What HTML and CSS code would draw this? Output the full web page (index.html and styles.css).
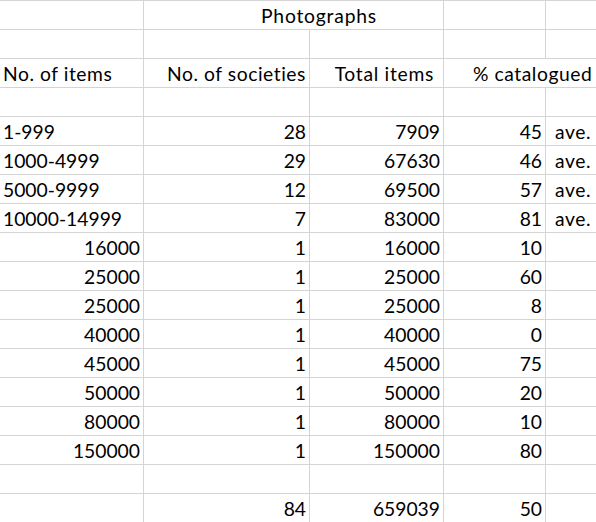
FILE: index.html
```html
<!DOCTYPE html>
<html>
<head>
<meta charset="utf-8">
<link rel="stylesheet" href="styles.css">
</head>
<body>
<div class="sheet">
  <div class="c"></div><div class="c span2 title t">Photographs</div><div class="c"></div><div class="c e"></div>
  <div class="c"></div><div class="c"></div><div class="c"></div><div class="c"></div><div class="c e"></div>
  <div class="c t">No. of items</div><div class="c r t">No. of societies</div><div class="c r t hdr-total">Total items</div><div class="c span2 e t hdr-pct">% catalogued</div>
  <div class="c"></div><div class="c"></div><div class="c"></div><div class="c"></div><div class="c e"></div>

  <div class="c">1-999</div><div class="c r">28</div><div class="c r">7909</div><div class="c r">45</div><div class="c e note t">ave.</div>
  <div class="c">1000-4999</div><div class="c r">29</div><div class="c r">67630</div><div class="c r">46</div><div class="c e note t">ave.</div>
  <div class="c">5000-9999</div><div class="c r">12</div><div class="c r">69500</div><div class="c r">57</div><div class="c e note t">ave.</div>
  <div class="c">10000-14999</div><div class="c r">7</div><div class="c r">83000</div><div class="c r">81</div><div class="c e note t">ave.</div>
  <div class="c r">16000</div><div class="c r">1</div><div class="c r">16000</div><div class="c r">10</div><div class="c e"></div>
  <div class="c r">25000</div><div class="c r">1</div><div class="c r">25000</div><div class="c r">60</div><div class="c e"></div>
  <div class="c r">25000</div><div class="c r">1</div><div class="c r">25000</div><div class="c r">8</div><div class="c e"></div>
  <div class="c r">40000</div><div class="c r">1</div><div class="c r">40000</div><div class="c r">0</div><div class="c e"></div>
  <div class="c r">45000</div><div class="c r">1</div><div class="c r">45000</div><div class="c r">75</div><div class="c e"></div>
  <div class="c r">50000</div><div class="c r">1</div><div class="c r">50000</div><div class="c r">20</div><div class="c e"></div>
  <div class="c r">80000</div><div class="c r">1</div><div class="c r">80000</div><div class="c r">10</div><div class="c e"></div>
  <div class="c r">150000</div><div class="c r">1</div><div class="c r">150000</div><div class="c r">80</div><div class="c e"></div>
  <div class="c"></div><div class="c"></div><div class="c"></div><div class="c"></div><div class="c e"></div>
  <div class="c"></div><div class="c r">84</div><div class="c r">659039</div><div class="c r">50</div><div class="c e"></div>
</div>
</body>
</html>
```

FILE: styles.css
```css
html, body {
  margin: 0;
  padding: 0;
  background: #ffffff;
}

body {
  overflow: hidden;
}

.sheet {
  display: grid;
  grid-template-columns: 144px 166px 134px 102px minmax(0, 1fr);
  grid-auto-rows: 29px;
  border-top: 1px solid #d4d4d4;
  font-family: Lato, "Liberation Sans", sans-serif;
  font-size: 19.3px;
  line-height: 28px;
  color: #000000;
}

.c {
  box-sizing: border-box;
  border-right: 1px solid #d4d4d4;
  border-bottom: 1px solid #d4d4d4;
  padding: 1px 3px 0 3px;
  white-space: nowrap;
  overflow: visible;
}

.e {
  border-right: none;
}

.t {
  letter-spacing: 0.55px;
}

.r {
  text-align: right;
}

.span2 {
  grid-column: span 2;
}

.title {
  padding-left: 117px;
  letter-spacing: 0.8px;
}

.hdr-total {
  padding-right: 9px;
  letter-spacing: 0.7px;
}

.hdr-pct {
  padding-left: 29px;
}

.note {
  padding-left: 9px;
}
```
